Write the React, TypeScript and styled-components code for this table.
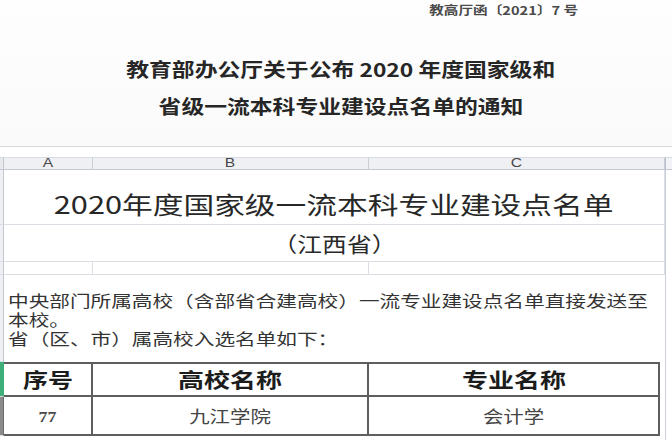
import React from "react";
import styled, { createGlobalStyle } from "styled-components";

const GlobalStyle = createGlobalStyle`
  html, body { margin: 0; padding: 0; background: #ffffff; }
  body { font-family: "Noto Sans CJK SC", "Noto Sans", sans-serif; }
`;

const Page = styled.div`
  width: 672px;
  height: 440px;
  overflow: hidden;
  background: #ffffff;
  display: flex;
  flex-direction: column;
`;

/* ---------- scanned document header ---------- */
const DocHeader = styled.header`
  height: 147px;
  box-sizing: border-box;
  flex: none;
  background: linear-gradient(#fefefe, #fafafa);
  border-bottom: 1px solid #dadada;
  display: flex;
  flex-direction: column;
`;

const FileNoRow = styled.div`
  display: flex;
  justify-content: flex-end;
  padding: 3px 94px 0 0;
  font-size: 12px;
  line-height: 14px;
  font-weight: 700;
  color: #4a4a4a;
`;

const DocTitles = styled.div`
  margin-top: 33px;
  padding-left: 10px;
  display: flex;
  flex-direction: column;
  align-items: center;
  font-size: 19px;
  line-height: 37px;
  font-weight: 700;
  color: #262626;
`;

const Stretch = styled.span<{ $sx: number; $origin?: string }>`
  display: inline-block;
  white-space: nowrap;
  transform: scaleX(${(p) => p.$sx});
  transform-origin: ${(p) => p.$origin ?? "center"};
`;

const Gap = styled.div`
  height: 10px;
  flex: none;
  background: #ffffff;
`;

/* ---------- spreadsheet ---------- */
const Sheet = styled.div`
  flex: 1;
  display: grid;
  grid-template-columns: 4px 89px 276px 296px 1fr;
  grid-template-rows: 13px 55px 37px 13px 87px 35px 39px 1fr;
`;

const Corner = styled.div`
  grid-row: 1;
  grid-column: 1;
  background: #e6e9ee;
  border-top: 1px solid #d8dce2;
  border-bottom: 1px solid #c3c8d0;
  border-right: 1px solid #c3c8d0;
  box-sizing: border-box;
`;

const ColHead = styled.div<{ $col: number }>`
  grid-row: 1;
  grid-column: ${(p) => p.$col};
  background: #eef0f4;
  border-top: 1px solid #d8dce2;
  border-bottom: 1px solid #c3c8d0;
  border-right: 1px solid #c9ced6;
  box-sizing: border-box;
  display: flex;
  align-items: center;
  justify-content: center;
  font-family: "Liberation Sans", Arial, sans-serif;
  font-size: 12px;
  line-height: 11px;
  color: #474747;
`;

const HeadFiller = styled.div`
  grid-row: 1;
  grid-column: 5;
  background: #f2f3f6;
  border-top: 1px solid #d8dce2;
  border-bottom: 1px solid #c3c8d0;
  border-left: 1px solid #b9bfc9;
  box-sizing: border-box;
`;

const Filler = styled.div`
  grid-row: 2 / -1;
  grid-column: 5;
  border-left: 1px solid #cbd0d8;
  background: #ffffff;
`;

const RowHead = styled.div<{ $row: number; $tone?: "plain" | "active" | "dark" }>`
  grid-row: ${(p) => p.$row};
  grid-column: 1;
  box-sizing: border-box;
  background: ${(p) =>
    p.$tone === "active" ? "#3fae78" : p.$tone === "dark" ? "#8a8a8a" : "#eef0f4"};
  border-right: 1px solid
    ${(p) => (p.$tone === "active" ? "#3fae78" : p.$tone === "dark" ? "#6a6a6a" : "#c3c8d0")};
  border-bottom: 1px solid #d9dde3;
`;

const GridCell = styled.div<{ $row: number; $col: string }>`
  grid-row: ${(p) => p.$row};
  grid-column: ${(p) => p.$col};
  box-sizing: border-box;
  border-right: 1px solid #dadee5;
  border-bottom: 1px solid #dadee5;
`;

const SheetTitle = styled(GridCell)`
  display: flex;
  align-items: flex-end;
  justify-content: center;
  padding-bottom: 5px;
  font-size: 24px;
  line-height: 30px;
  color: #272727;
`;

const SheetSubtitle = styled(GridCell)`
  display: flex;
  align-items: center;
  justify-content: center;
  font-size: 21px;
  line-height: 26px;
  color: #2a2a2a;
`;

const NoteCell = styled.div`
  grid-row: 5;
  grid-column: 2 / 5;
  padding: 16px 0 0 4px;
  display: flex;
  flex-direction: column;
  align-items: flex-start;
  font-size: 16px;
  line-height: 19px;
  color: #333333;
`;

const TableCell = styled.div<{ $row: number; $col: number; $head?: boolean }>`
  grid-row: ${(p) => p.$row};
  grid-column: ${(p) => p.$col};
  box-sizing: border-box;
  margin-right: ${(p) => (p.$col === 4 ? "5px" : "0")};
  border-right: 2px solid #5e5e5e;
  border-bottom: 2px solid #5e5e5e;
  border-top: ${(p) => (p.$head ? "2px solid #5e5e5e" : "none")};
  display: flex;
  align-items: center;
  justify-content: center;
  font-size: ${(p) => (p.$head ? "20px" : "17px")};
  font-weight: ${(p) => (p.$head ? 700 : 400)};
  color: ${(p) => (p.$head ? "#1c1c1c" : "#454545")};
  line-height: 24px;
`;

const SerifNum = styled.span`
  font-family: "Liberation Serif", "Times New Roman", serif;
  font-size: 15px;
  font-weight: 700;
  color: #4a4a4a;
`;

export default function App() {
  return (
    <>
      <GlobalStyle />
      <Page>
        <DocHeader>
          <FileNoRow>
            <Stretch $sx={1.22} $origin="right">教高厅函〔2021〕7 号</Stretch>
          </FileNoRow>
          <DocTitles>
            <Stretch $sx={1.2}>教育部办公厅关于公布 2020 年度国家级和</Stretch>
            <Stretch $sx={1.2}>省级一流本科专业建设点名单的通知</Stretch>
          </DocTitles>
        </DocHeader>
        <Gap />
        <Sheet>
          <Corner />
          <ColHead $col={2}><Stretch $sx={1.3}>A</Stretch></ColHead>
          <ColHead $col={3}><Stretch $sx={1.3}>B</Stretch></ColHead>
          <ColHead $col={4}><Stretch $sx={1.3}>C</Stretch></ColHead>
          <HeadFiller />
          <Filler />

          <RowHead $row={2} />
          <SheetTitle $row={2} $col="2 / 5">
            <Stretch $sx={1.28}>2020年度国家级一流本科专业建设点名单</Stretch>
          </SheetTitle>

          <RowHead $row={3} />
          <SheetSubtitle $row={3} $col="2 / 5">
            <Stretch $sx={1.18}>（江西省）</Stretch>
          </SheetSubtitle>

          <RowHead $row={4} />
          <GridCell $row={4} $col="2" />
          <GridCell $row={4} $col="3" />
          <GridCell $row={4} $col="4" />

          <RowHead $row={5} />
          <NoteCell>
            <Stretch $sx={1.29} $origin="left">
              中央部门所属高校（含部省合建高校）一流专业建设点名单直接发送至
            </Stretch>
            <Stretch $sx={1.29} $origin="left">本校。</Stretch>
            <Stretch $sx={1.29} $origin="left">省（区、市）属高校入选名单如下：</Stretch>
          </NoteCell>

          <RowHead $row={6} $tone="active" />
          <TableCell $row={6} $col={2} $head><Stretch $sx={1.25}>序号</Stretch></TableCell>
          <TableCell $row={6} $col={3} $head><Stretch $sx={1.3}>高校名称</Stretch></TableCell>
          <TableCell $row={6} $col={4} $head><Stretch $sx={1.3}>专业名称</Stretch></TableCell>

          <RowHead $row={7} $tone="dark" />
          <TableCell $row={7} $col={2}>
            <Stretch $sx={1.2}><SerifNum>77</SerifNum></Stretch>
          </TableCell>
          <TableCell $row={7} $col={3}><Stretch $sx={1.2}>九江学院</Stretch></TableCell>
          <TableCell $row={7} $col={4}><Stretch $sx={1.2}>会计学</Stretch></TableCell>
        </Sheet>
      </Page>
    </>
  );
}
